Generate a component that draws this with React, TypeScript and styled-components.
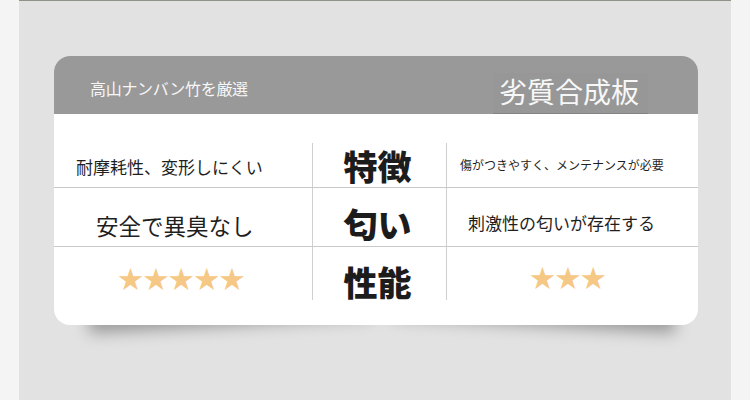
import React from "react";
import styled, { createGlobalStyle } from "styled-components";

const Global = createGlobalStyle`
  html, body { margin: 0; padding: 0; background: #f4f4f4; }
  body { font-family: "Noto Sans CJK JP", "Noto Sans", sans-serif; }
`;

const Panel = styled.div`
  position: relative;
  z-index: 0;
  box-sizing: border-box;
  width: 712px;
  height: 400px;
  margin: 0 19px;
  padding-top: 55px;
  padding-left: 35px;
  background: #e2e2e2;
  border-top: 1px solid #8e9389;
`;

const Card = styled.div`
  position: relative;
  width: 644px;
  height: 269px;
  background: #ffffff;
  border-radius: 16px;

  &::before,
  &::after {
    content: "";
    position: absolute;
    z-index: -1;
    bottom: 14px;
    width: 44%;
    height: 22px;
    box-shadow: 0 14px 16px rgba(0, 0, 0, 0.34);
  }
  &::before {
    left: 34px;
    transform: rotate(-3.2deg);
  }
  &::after {
    right: 22px;
    transform: rotate(3.2deg);
  }
`;

const Header = styled.div`
  display: flex;
  align-items: center;
  justify-content: space-between;
  box-sizing: border-box;
  height: 58px;
  padding: 5px 50px 0 36px;
  background: #999999;
  border-radius: 16px 16px 0 0;
  color: #f7f7f7;
`;

const HeaderNote = styled.span`
  font-size: 16px;
  letter-spacing: -0.3px;
  line-height: 1;
`;

const HeaderTitle = styled.span`
  display: flex;
  align-items: center;
  box-sizing: border-box;
  height: 41px;
  margin-top: 12px;
  padding: 0 9px 4px 6px;
  font-size: 28px;
  line-height: 1;
  background: #979797;
  border-bottom: 1px solid #838383;
`;

const Body = styled.div`
  display: grid;
  grid-template-columns: 258px 134px 252px;
  grid-template-rows: 45px 59px 53px;
  padding-top: 29px;
`;

type CellProps = {
  $divider?: boolean;
  $line?: boolean;
  $justify?: string;
  $pl?: number;
  $pt?: number;
};

const Cell = styled.div<CellProps>`
  display: flex;
  align-items: center;
  justify-content: ${(p) => p.$justify ?? "flex-start"};
  box-sizing: border-box;
  padding-left: ${(p) => p.$pl ?? 0}px;
  padding-top: ${(p) => p.$pt ?? 0}px;
  border-left: ${(p) => (p.$divider ? "1px solid #cfcfcf" : "none")};
  border-bottom: ${(p) => (p.$line ? "1px solid #c9c9c9" : "none")};
  color: #1f1f1f;
`;

const Text = styled.span<{ $size: number }>`
  font-size: ${(p) => p.$size}px;
  line-height: 1;
  white-space: nowrap;
`;

const Label = styled.span`
  font-size: 34px;
  font-weight: 900;
  line-height: 1;
  color: #1c1c1c;
  margin-right: 4px;
`;

const Stars = styled.span`
  font-size: 25px;
  line-height: 1;
  color: #f6c885;
  letter-spacing: 0.4px;
`;

export default function App() {
  return (
    <>
      <Global />
      <Panel>
        <Card>
          <Header>
            <HeaderNote>高山ナンバン竹を厳選</HeaderNote>
            <HeaderTitle>劣質合成板</HeaderTitle>
          </Header>
          <Body>
            <Cell $line $pl={22} $pt={3}>
              <Text $size={17}>耐摩耗性、変形しにくい</Text>
            </Cell>
            <Cell $line $divider $justify="center" $pt={2}>
              <Label>特徴</Label>
            </Cell>
            <Cell $line $divider $pl={13} $pt={0}>
              <Text $size={12}>傷がつきやすく、メンテナンスが必要</Text>
            </Cell>

            <Cell $line $pl={42} $pt={16}>
              <Text $size={22.5}>安全で異臭なし</Text>
            </Cell>
            <Cell $line $divider $justify="center" $pt={13}>
              <Label>匂い</Label>
            </Cell>
            <Cell $line $divider $pl={21} $pt={11}>
              <Text $size={17}>刺激性の匂いが存在する</Text>
            </Cell>

            <Cell $pl={64} $pt={7}>
              <Stars>★★★★★</Stars>
            </Cell>
            <Cell $divider $justify="center" $pt={17}>
              <Label>性能</Label>
            </Cell>
            <Cell $divider $pl={83} $pt={5}>
              <Stars>★★★</Stars>
            </Cell>
          </Body>
        </Card>
      </Panel>
    </>
  );
}
